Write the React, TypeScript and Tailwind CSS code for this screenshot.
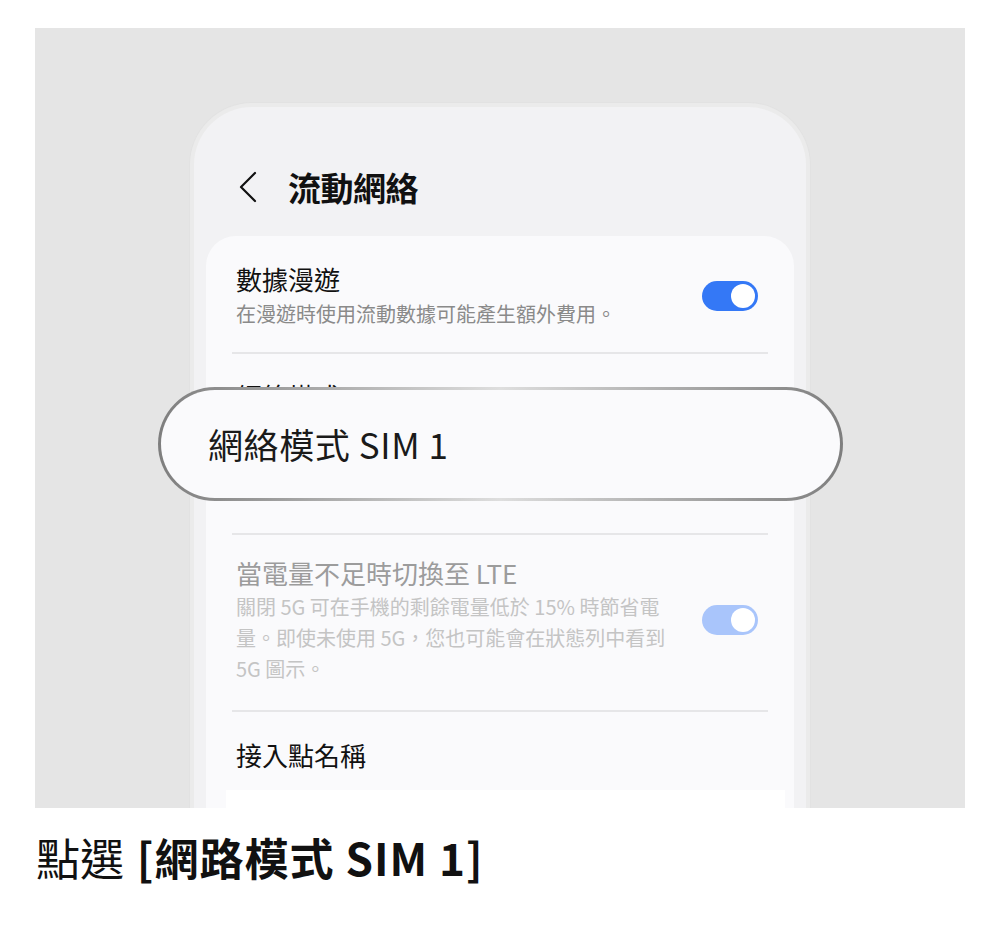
import { ReactNode } from 'react';

const Toggle = ({ dim = false }: { dim?: boolean }) => (
  <div
    className={`w-[56px] h-[30px] rounded-full flex items-center justify-end pr-[3px] shrink-0 ${
      dim ? 'bg-[#a9c5fb]' : 'bg-[#3478f6]'
    }`}
  >
    <div className="w-[24px] h-[24px] rounded-full bg-white" />
  </div>
);

const Row = ({ children, toggle, className }: { children: ReactNode; toggle?: ReactNode; className: string }) => (
  <div className={`flex items-center justify-between pl-1 pr-[10px] ${className}`}>
    <div className="flex flex-col">{children}</div>
    {toggle}
  </div>
);

const Divider = () => <div className="h-[2px] bg-[#e6e6e8]" />;

export default function App() {
  return (
    <div className="w-[1000px] h-[929px] bg-white font-['Noto_Sans_CJK_TC',sans-serif] pt-[28px]">
      {/* grey stage with the phone */}
      <div className="relative mx-[35px] h-[780px] bg-[#e5e5e5] overflow-hidden flex justify-center pt-[75px]">
        <div className="w-[620px] rounded-t-[62px] bg-[#ebebeb] px-[4px] pt-[4px] shadow-[0_0_0_1px_#e2e2e2]">
          <div className="h-full rounded-t-[58px] bg-[#f2f2f4] px-[12px]">
            {/* header */}
            <div className="h-[129px] flex items-center pl-[32px] pt-[30px]">
              <svg width="20" height="32" viewBox="0 0 20 32" fill="none">
                <polyline points="17,2 3,16 17,30" stroke="#111" strokeWidth="2.2" strokeLinecap="round" strokeLinejoin="round" />
              </svg>
              <h1 className="ml-[30px] text-[33px] leading-[40px] font-bold text-[#111] tracking-[-0.5px]">流動網絡</h1>
            </div>

            {/* settings card */}
            <div className="rounded-t-[30px] bg-[#fafafc] px-[26px]">
              <Row className="h-[116px] pt-[3px]" toggle={<Toggle />}>
                <span className="text-[26px] leading-[34px] text-[#111]">數據漫遊</span>
                <span className="text-[20px] leading-[30px] text-[#8a8a8a] mt-[3px]">在漫遊時使用流動數據可能產生額外費用。</span>
              </Row>
              <Divider />
              <Row className="h-[179px] items-start pt-[25px]">
                <span className="text-[26px] leading-[34px] text-[#111]">網絡模式 SIM 1</span>
                <span className="text-[20px] leading-[30px] text-[#3478f6] mt-[4px]">5G/LTE/3G/2G（自動連接）</span>
              </Row>
              <Divider />
              <Row className="h-[175px] pb-[5px]" toggle={<Toggle dim />}>
                <span className="text-[26px] leading-[34px] text-[#9c9c9c]">當電量不足時切換至 LTE</span>
                <span className="w-[440px] text-[20px] leading-[31px] text-[#c4c4c4] mt-[1px]">
                  關閉 5G 可在手機的剩餘電量低於 15% 時節省電量。即使未使用 5G，您也可能會在狀態列中看到 5G 圖示。
                </span>
              </Row>
              <Divider />
              <Row className="h-[78px] items-start pt-[26px]">
                <span className="text-[26px] leading-[34px] text-[#111]">接入點名稱</span>
              </Row>
              <div className="ml-[-6px] mr-[-17px] h-[60px] bg-white" />
            </div>
          </div>
        </div>

        {/* highlighted option */}
        <div className="absolute left-[123px] top-[359px] w-[685px] h-[114px] rounded-full p-[3px] bg-gradient-to-r from-[#7e7e7e] via-[#dedede] to-[#7e7e7e]">
          <div className="w-full h-full rounded-full bg-[#fafafc] flex items-center pl-[47px]">
            <span className="text-[35px] leading-[44px] text-[#1a1a1a] tracking-[0.6px]">網絡模式 SIM 1</span>
          </div>
        </div>
      </div>

      <p className="mt-[21px] ml-[36px] text-[44px] leading-[56px] text-[#111]">
        點選 <span className="ml-[3px] font-bold tracking-[1px]">[網路模式 SIM 1]</span>
      </p>
    </div>
  );
}
